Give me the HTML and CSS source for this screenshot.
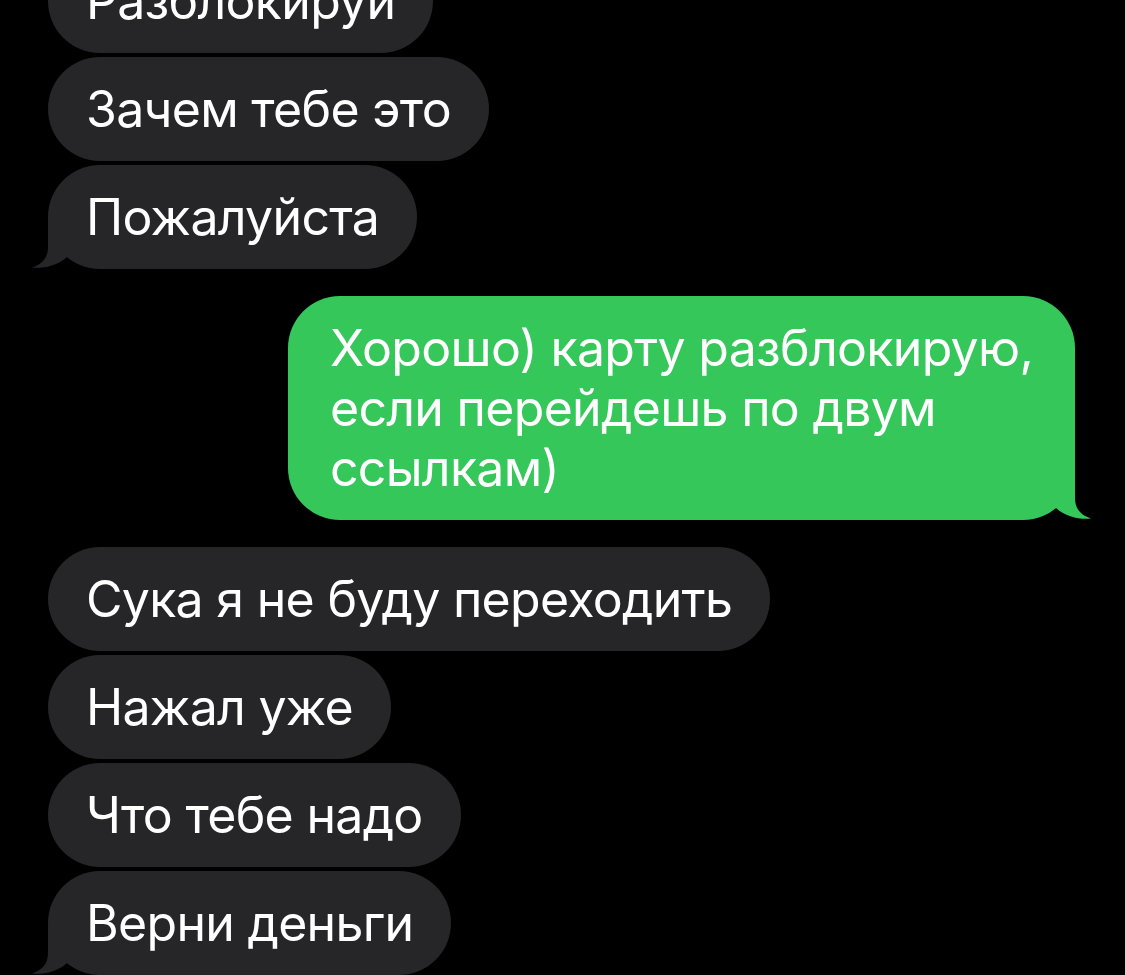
FILE: index.html
```html
<!DOCTYPE html>
<html lang="ru">
<head>
<meta charset="utf-8">
<title>Сообщения</title>
<link rel="stylesheet" href="styles.css">
</head>
<body>
<main class="thread">
  <div class="msg in">Разблокируй</div>
  <div class="msg in">Зачем тебе это</div>
  <div class="msg in has-tail">Пожалуйста<svg class="tail tail-in" viewBox="0 0 40 52" aria-hidden="true"><path d="M17,0 L17,30 C17,40 12,47 1,50.5 C11,52 26,49 36,40 L40,0 Z"/></svg></div>
  <div class="msg out has-tail">Хорошо) карту разблокирую,<br>если перейдешь по двум<br>ссылкам)<svg class="tail tail-out" viewBox="0 0 40 52" aria-hidden="true"><path d="M17,0 L17,30 C17,40 12,47 1,50.5 C11,52 26,49 36,40 L40,0 Z"/></svg></div>
  <div class="msg in">Сука я не буду переходить</div>
  <div class="msg in">Нажал уже</div>
  <div class="msg in">Что тебе надо</div>
  <div class="msg in has-tail">Верни деньги<svg class="tail tail-in" viewBox="0 0 40 52" aria-hidden="true"><path d="M17,0 L17,30 C17,40 12,47 1,50.5 C11,52 26,49 36,40 L40,0 Z"/></svg></div>
</main>
</body>
</html>
```
FILE: styles.css
```css
html, body {
  margin: 0;
  background: #000;
  overflow: hidden;
}
body {
  font-family: Inter, Roboto, "Noto Sans", sans-serif;
  -webkit-font-smoothing: antialiased;
}
.thread {
  display: flex;
  flex-direction: column;
  align-items: flex-start;
  gap: 4px;
  padding: 0 50px 0 48px;
  margin-top: -51px;
}
.msg {
  position: relative;
  box-sizing: border-box;
  min-height: 104px;
  padding: 22px 38px;
  border-radius: 52px;
  font-size: 50px;
  line-height: 60px;
  color: #fff;
  white-space: nowrap;
  letter-spacing: -0.7px;
}
.msg.in {
  background: #262628;
}
.msg.out {
  align-self: flex-end;
  width: 787px;
  margin: 23px 0;
  padding: 22px 42px;
  background: #35c75a;
}
.tail {
  position: absolute;
  bottom: 0;
  width: 40px;
  height: 52px;
}
.tail-in {
  left: -17px;
  fill: #262628;
}
.tail-out {
  right: -17px;
  fill: #35c75a;
  transform: scaleX(-1);
}
```
